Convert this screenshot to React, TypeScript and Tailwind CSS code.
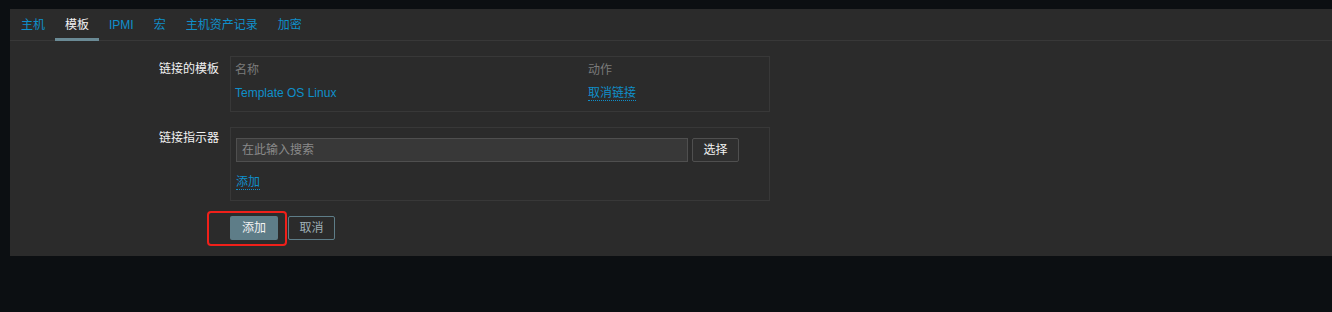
const FONT = { fontFamily: '"Liberation Sans", Arial, "Noto Sans CJK SC", sans-serif' };

const TABS = ["主机", "模板", "IPMI", "宏", "主机资产记录", "加密"];
const ACTIVE = 1;

function Tabs() {
  return (
    <div className="flex h-[32px] border-b border-[#383838] pl-px">
      {TABS.map((t, i) => (
        <div
          key={t}
          className={
            "-mb-px flex h-[32px] items-center border-b-[3px] px-[10px] pt-[2px] text-[12px] leading-[16px] " +
            (i === ACTIVE ? "border-[#6a8a95] text-[#f2f2f2]" : "border-transparent text-[#0f8fca]")
          }
        >
          {t}
        </div>
      ))}
    </div>
  );
}

function DottedLink({ children }: { children: React.ReactNode }) {
  return (
    <span className="border-b border-dotted border-[#0f8fca] text-[#0f8fca]">{children}</span>
  );
}

function FormRow({ label, children, labelTop = "pt-[5px]" }: { label: string; children: React.ReactNode; labelTop?: string }) {
  return (
    <div className="flex">
      <div className={"w-[210px] pr-px text-right text-[12px] leading-[16px] text-[#f2f2f2] " + labelTop}>
        {label}
      </div>
      <div className="ml-[10px] w-[540px]">{children}</div>
    </div>
  );
}

export default function App() {
  return (
    <div className="h-[312px] w-[1332px] bg-[#0c0f12] pt-[9px] pl-[10px] text-[12px]" style={FONT}>
      <div className="h-[247px] bg-[#2b2b2b]">
        <Tabs />

        <div className="flex flex-col pt-[15px]">
          <FormRow label="链接的模板">
            <div className="h-[56px] border border-[#383838] px-[4px] pt-[5px] leading-[16px]">
              <div className="flex text-[#7b7b7b]">
                <div className="w-[353px]">名称</div>
                <div>动作</div>
              </div>
              <div className="mt-[7px] flex">
                <div className="w-[353px] text-[#0f8fca]">Template OS Linux</div>
                <div>
                  <DottedLink>取消链接</DottedLink>
                </div>
              </div>
            </div>
          </FormRow>

          <div className="mt-[15px]">
            <FormRow label="链接指示器" labelTop="pt-[3px]">
              <div className="h-[74px] border border-[#383838] px-[5px] pt-[10px] leading-[16px]">
                <div className="flex gap-[4px]">
                  <div className="flex h-[24px] w-[452px] items-center border border-[#4f4f4f] bg-[#383838] pl-[5px] text-[#8a8a8a]">
                    在此输入搜索
                  </div>
                  <div className="flex h-[24px] w-[47px] items-center justify-center rounded-[2px] border border-[#4f4f4f] bg-[#2f2f2f] text-[#f2f2f2]">
                    选择
                  </div>
                </div>
                <div className="mt-[12px]">
                  <DottedLink>添加</DottedLink>
                </div>
              </div>
            </FormRow>
          </div>

          <div className="mt-[15px] flex pl-[220px]">
            <div className="relative flex gap-[10px]">
              <div className="flex h-[24px] w-[48px] items-center justify-center rounded-[2px] bg-[#5e7d88] text-[#f2f2f2]">
                添加
              </div>
              <div className="flex h-[24px] w-[47px] items-center justify-center rounded-[2px] border border-[#5e7d88] text-[#9fb1b7]">
                取消
              </div>
              <div className="pointer-events-none absolute left-[-23px] top-[-5px] h-[35px] w-[80px] rounded-[4px] border-[2px] border-[#f0201a]" />
            </div>
          </div>
        </div>
      </div>
    </div>
  );
}
